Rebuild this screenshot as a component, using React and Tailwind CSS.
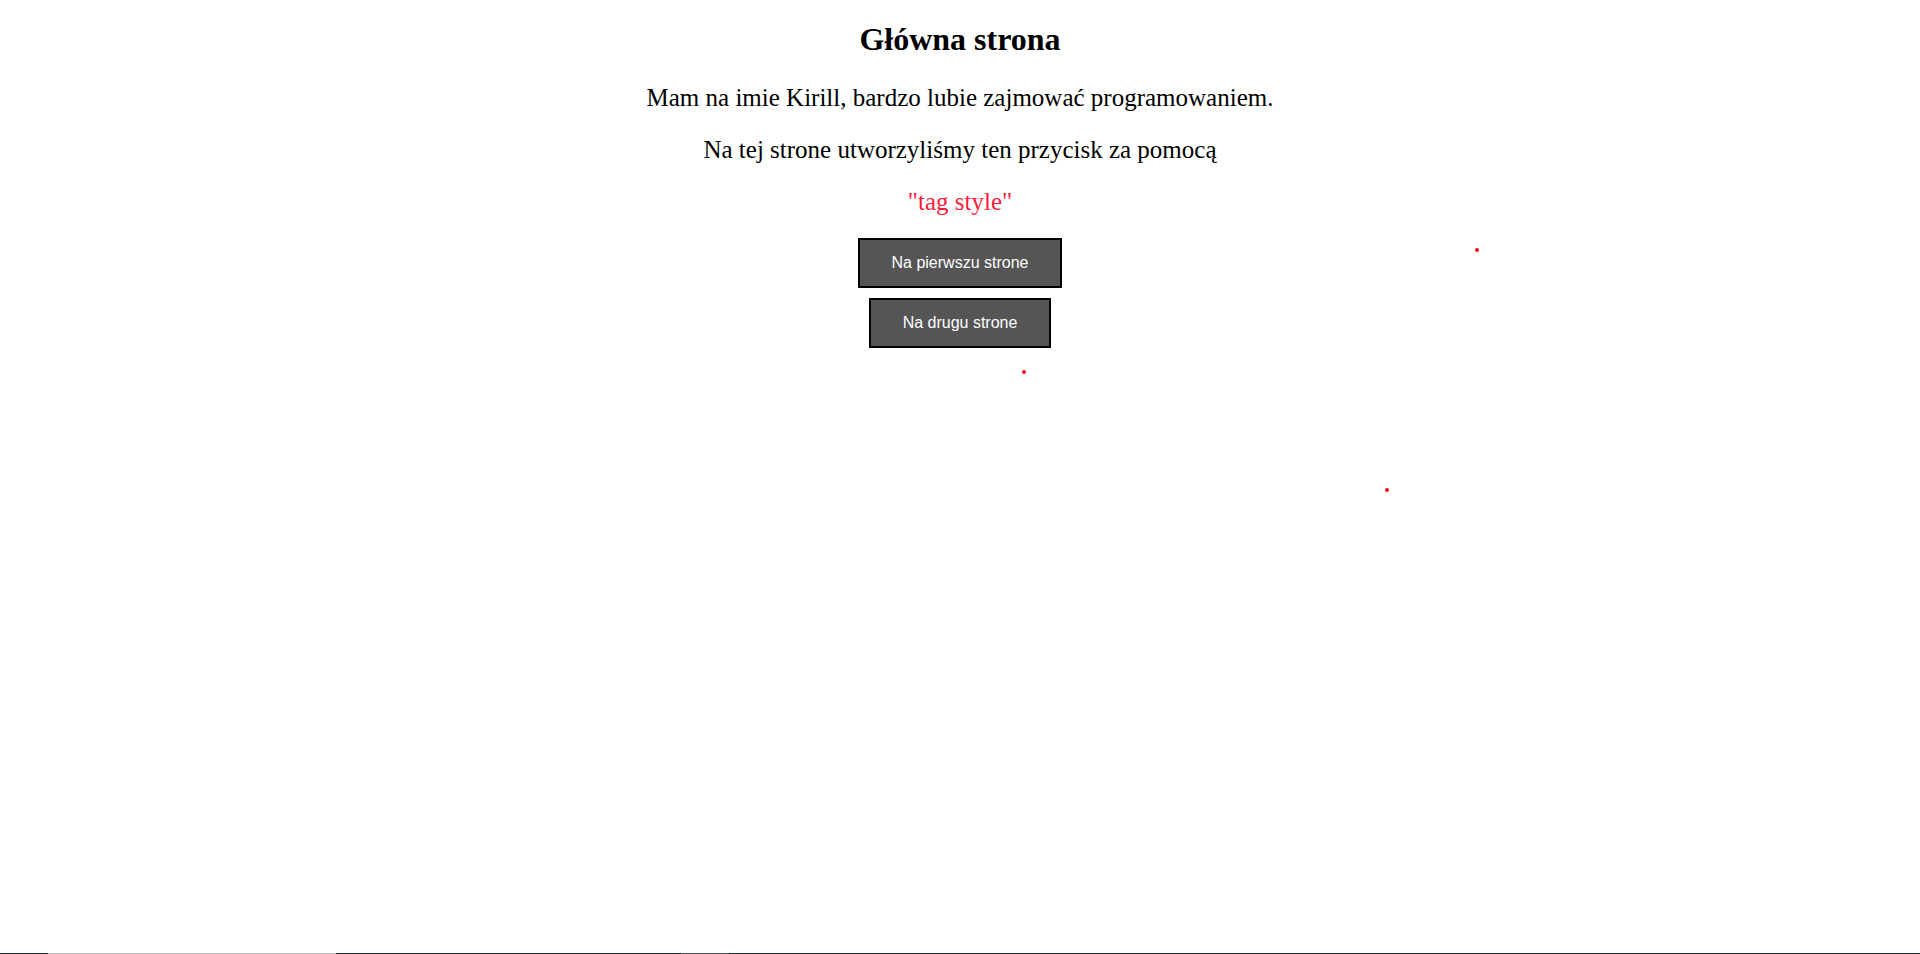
export default function App() {
  return (
    <div className="relative flex min-h-[954px] w-full flex-col bg-white">
      <div className="flex flex-col items-center text-center text-black font-['Liberation_Serif','Times_New_Roman',serif]">
        <h1 className="mt-[21px] text-[32px] font-bold leading-[37px]">Główna strona</h1>
        <p className="mt-[25.5px] text-[25px] leading-[28px]">Mam na imie Kirill, bardzo lubie zajmować programowaniem.</p>
        <p className="mt-[24.5px] text-[25px] leading-[28px]">Na tej strone utworzyliśmy ten przycisk za pomocą</p>
        <p className="mt-[24px] text-[25px] leading-[28px] text-[#ff1a3d]">"tag style"</p>
        <div className="mt-[22px] flex flex-col items-center gap-[10px] font-['Liberation_Sans',Arial,sans-serif]">
          <button className="h-[50px] border-2 border-black bg-[#555555] px-[32px] text-[16px] leading-[18px] text-white">
            Na pierwszu strone
          </button>
          <button className="h-[50px] border-2 border-black bg-[#555555] px-[32px] text-[16px] leading-[18px] text-white">
            Na drugu strone
          </button>
        </div>
      </div>

      <span className="absolute left-[1475px] top-[248px] h-[4px] w-[4px] rounded-full bg-[#f01010]" />
      <span className="absolute left-[1022px] top-[370px] h-[4px] w-[4px] rounded-full bg-[#f01010]" />
      <span className="absolute left-[1385px] top-[488px] h-[4px] w-[4px] rounded-full bg-[#f01010]" />

      <div className="mt-auto flex h-[1px] w-full">
        <div className="w-[48px] bg-[#263033]" />
        <div className="w-[288px] bg-[#c0c0c0]" />
        <div className="w-[345px] bg-[#263033]" />
        <div className="w-[48px] bg-[#555a5c]" />
        <div className="flex-1 bg-[#263033]" />
      </div>
    </div>
  );
}
